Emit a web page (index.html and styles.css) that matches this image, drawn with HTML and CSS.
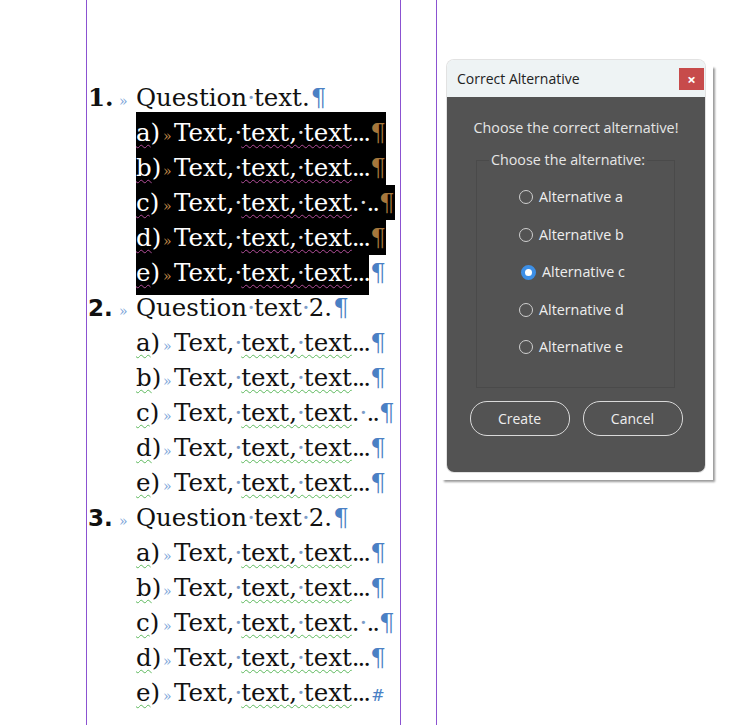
FILE: index.html
```html
<!DOCTYPE html>
<html>
<head>
<meta charset="utf-8">
<title>Correct Alternative</title>
<link rel="stylesheet" href="styles.css">
</head>
<body>
<div class="page">
  <div class="margin"></div>
  <div class="doc">
    <div class="q"><span class="num">1.</span><span class="tab">»</span>Question<span class="sp">·</span>text.<span class="pm">¶</span></div>
    <div class="alt hlrow first"><span class="hl"><span class="lbl"><span class="wv">a</span>)</span><span class="tab2">»</span>Text,<span class="sp">·</span><span class="wv">text,<span class="sp">·</span>text</span><span class="ell">...</span><span class="pm">¶</span></span></div>
    <div class="alt hlrow"><span class="hl"><span class="lbl"><span class="wv">b</span>)</span><span class="tab2">»</span>Text,<span class="sp">·</span><span class="wv">text,<span class="sp">·</span>text</span><span class="ell">...</span><span class="pm">¶</span></span></div>
    <div class="alt hlrow"><span class="hl"><span class="lbl"><span class="wv">c</span>)</span><span class="tab2">»</span>Text,<span class="sp">·</span><span class="wv">text,<span class="sp">·</span>text</span>.<span class="sp">·</span><span class="ell">..</span><span class="pm">¶</span></span></div>
    <div class="alt hlrow"><span class="hl"><span class="lbl"><span class="wv">d</span>)</span><span class="tab2">»</span>Text,<span class="sp">·</span><span class="wv">text,<span class="sp">·</span>text</span><span class="ell">...</span><span class="pm">¶</span></span></div>
    <div class="alt hlrow last"><span class="hl"><span class="lbl"><span class="wv">e</span>)</span><span class="tab2">»</span>Text,<span class="sp">·</span><span class="wv">text,<span class="sp">·</span>text</span><span class="ell">...</span></span><span class="pm">¶</span></div>

    <div class="q"><span class="num num2">2.</span><span class="tab">»</span>Question<span class="sp">·</span>text<span class="sp">·</span>2.<span class="pm">¶</span></div>
    <div class="alt"><span class="lbl"><span class="wv">a</span>)</span><span class="tab2">»</span>Text,<span class="sp">·</span><span class="wv">text,<span class="sp">·</span>text</span><span class="ell">...</span><span class="pm">¶</span></div>
    <div class="alt"><span class="lbl"><span class="wv">b</span>)</span><span class="tab2">»</span>Text,<span class="sp">·</span><span class="wv">text,<span class="sp">·</span>text</span><span class="ell">...</span><span class="pm">¶</span></div>
    <div class="alt"><span class="lbl"><span class="wv">c</span>)</span><span class="tab2">»</span>Text,<span class="sp">·</span><span class="wv">text,<span class="sp">·</span>text</span>.<span class="sp">·</span><span class="ell">..</span><span class="pm">¶</span></div>
    <div class="alt"><span class="lbl"><span class="wv">d</span>)</span><span class="tab2">»</span>Text,<span class="sp">·</span><span class="wv">text,<span class="sp">·</span>text</span><span class="ell">...</span><span class="pm">¶</span></div>
    <div class="alt"><span class="lbl"><span class="wv">e</span>)</span><span class="tab2">»</span>Text,<span class="sp">·</span><span class="wv">text,<span class="sp">·</span>text</span><span class="ell">...</span><span class="pm">¶</span></div>

    <div class="q"><span class="num num2">3.</span><span class="tab">»</span>Question<span class="sp">·</span>text<span class="sp">·</span>2.<span class="pm">¶</span></div>
    <div class="alt"><span class="lbl"><span class="wv">a</span>)</span><span class="tab2">»</span>Text,<span class="sp">·</span><span class="wv">text,<span class="sp">·</span>text</span><span class="ell">...</span><span class="pm">¶</span></div>
    <div class="alt"><span class="lbl"><span class="wv">b</span>)</span><span class="tab2">»</span>Text,<span class="sp">·</span><span class="wv">text,<span class="sp">·</span>text</span><span class="ell">...</span><span class="pm">¶</span></div>
    <div class="alt"><span class="lbl"><span class="wv">c</span>)</span><span class="tab2">»</span>Text,<span class="sp">·</span><span class="wv">text,<span class="sp">·</span>text</span>.<span class="sp">·</span><span class="ell">..</span><span class="pm">¶</span></div>
    <div class="alt"><span class="lbl"><span class="wv">d</span>)</span><span class="tab2">»</span>Text,<span class="sp">·</span><span class="wv">text,<span class="sp">·</span>text</span><span class="ell">...</span><span class="pm">¶</span></div>
    <div class="alt"><span class="lbl"><span class="wv">e</span>)</span><span class="tab2">»</span>Text,<span class="sp">·</span><span class="wv">text,<span class="sp">·</span>text</span><span class="ell">...</span><span class="end">#</span></div>
  </div>
  <div class="gutter"></div>
  <div class="frame">
    <div class="win">
      <div class="titlebar">
        <span class="title">Correct Alternative</span>
        <span class="close">×</span>
      </div>
      <div class="body">
        <div class="prompt">Choose the correct alternative!</div>
        <fieldset class="group">
          <legend>Choose the alternative:</legend>
          <div class="opts">
            <div class="opt"><span class="radio"></span>Alternative a</div>
            <div class="opt"><span class="radio"></span>Alternative b</div>
            <div class="opt on"><span class="radio"></span>Alternative c</div>
            <div class="opt"><span class="radio"></span>Alternative d</div>
            <div class="opt"><span class="radio"></span>Alternative e</div>
          </div>
        </fieldset>
        <div class="buttons">
          <span class="btn">Create</span>
          <span class="btn">Cancel</span>
        </div>
      </div>
    </div>
  </div>
</div>
</body>
</html>
```
FILE: styles.css
```css
html, body {
  margin: 0;
  padding: 0;
  background: #fff;
}
body {
  width: 746px;
  height: 725px;
  overflow: hidden;
}
.page {
  display: flex;
  height: 725px;
}
.margin {
  width: 86px;
  flex: none;
}
.doc {
  width: 313px;
  flex: none;
  border-left: 1px solid #8b52d1;
  border-right: 1px solid #8b52d1;
  padding-top: 80px;
  font-family: "DejaVu Serif", serif;
  font-size: 24.5px;
  line-height: 35px;
  color: #111;
  white-space: nowrap;
}
.q, .alt {
  height: 35px;
}
.q {
  padding-left: 1px;
}
.num {
  display: inline-block;
  width: 31px;
  font-weight: bold;
  line-height: 1;
}
.num2 {
  font-family: "DejaVu Sans", sans-serif;
  font-size: 23px;
}
.tab {
  display: inline-block;
  width: 17px;
  font-size: 14px;
  line-height: 1;
  color: #7ea6d9;
}
.alt {
  padding-left: 49px;
}
.lbl {
  display: inline-block;
  width: 27px;
  line-height: 1;
}
.tab2 {
  display: inline-block;
  width: 11px;
  font-size: 14px;
  line-height: 1;
  color: #7ea6d9;
}
.sp {
  color: #7b9cc8;
  letter-spacing: -1px;
}
.ell {
  letter-spacing: -2px;
}
.pm {
  color: #4a80c4;
  margin-left: 1px;
}
.end {
  color: #4a80c4;
  font-size: 16px;
  margin-left: 2px;
}
.wv {
  text-decoration: underline wavy #5cb85c;
  text-decoration-thickness: 1px;
  text-underline-offset: 3px;
}
.hl {
  display: inline-block;
  vertical-align: top;
  height: 35px;
  background: #000;
  color: #fff;
}
.first .hl {
  padding-top: 3px;
  margin-top: -3px;
}
.last .hl {
  padding-bottom: 5px;
}
.hl .tab2 {
  color: #c0894a;
}
.hl .pm {
  color: #a6773c;
}
.hl .sp {
  color: #dddddd;
}
.hl .wv {
  text-decoration-color: #b5509c;
}

/* dialog */
.gutter {
  width: 35px;
  flex: none;
  border-right: 1px solid #8b52d1;
}
.frame {
  align-self: flex-start;
  margin: 66px 0 0 5px;
  padding: 0 8px 8px 5px;
  width: 258px;
  background: #fff;
  box-shadow: 2px 2px 2px rgba(0, 0, 0, 0.4);
}
.win {
  margin-top: -6px;
  width: 258px;
  border-radius: 7px;
  overflow: hidden;
  font-family: "Open Sans", "Noto Sans", sans-serif;
  box-shadow: 0 0 0 1px #e2e2e2;
}
.titlebar {
  height: 37px;
  background: #eef3f4;
  display: flex;
  align-items: center;
  justify-content: space-between;
  padding-left: 10px;
  box-sizing: border-box;
}
.title {
  font-size: 14px;
  color: #222;
}
.close {
  width: 25px;
  height: 22px;
  margin-right: 1px;
  background: #c74b4b;
  color: #fff;
  font-size: 15px;
  font-weight: bold;
  line-height: 22px;
  text-align: center;
}
.body {
  height: 375px;
  box-sizing: border-box;
  background: #535353;
  color: #e6e6e6;
  padding-top: 21px;
  font-size: 14.3px;
  line-height: 20px;
  text-align: center;
}
.group {
  margin: 12px 30px 0 29px;
  padding: 0;
  border: 1px solid #4a4a4a;
  text-align: left;
}
.group legend {
  margin-left: 12px;
  padding: 0 2px;
}
.opts {
  display: flex;
  flex-direction: column;
  gap: 17.5px;
  padding: 17px 0 30px 42px;
}
.opt {
  display: flex;
  align-items: center;
  height: 20px;
  color: #eeeeee;
}
.radio {
  width: 12px;
  height: 12px;
  border: 1.5px solid #cfcfcf;
  border-radius: 50%;
  margin-right: 6px;
  flex: none;
}
.opt.on .radio {
  margin-left: 2px;
  width: 7px;
  height: 7px;
  border: 4px solid #3d8fe6;
  background: #fff;
}
.buttons {
  display: flex;
  justify-content: center;
  gap: 13px;
  margin-top: 13px;
}
.btn {
  width: 98px;
  height: 33px;
  border: 1px solid #d9d9d9;
  border-radius: 17px;
  color: #eeeeee;
  font-size: 14px;
  line-height: 33px;
  text-align: center;
}
```
